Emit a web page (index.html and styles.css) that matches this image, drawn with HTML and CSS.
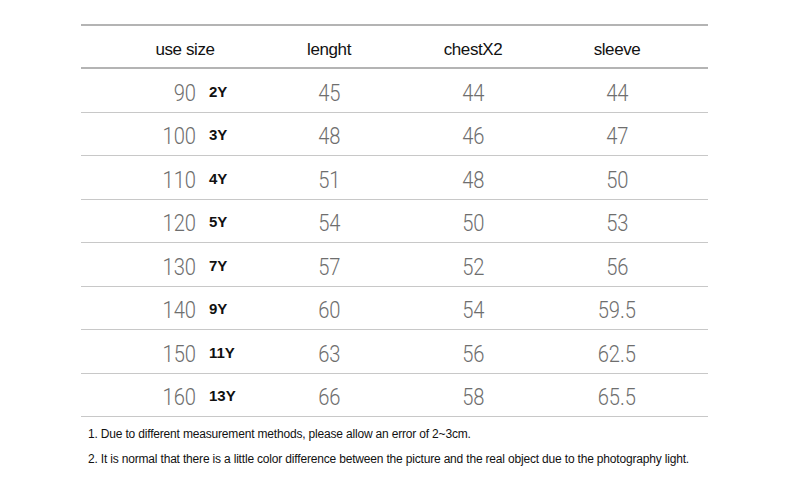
FILE: index.html
```html
<!DOCTYPE html>
<html>
<head>
<meta charset="utf-8">
<link rel="stylesheet" href="styles.css">
</head>
<body>
<div class="page">
  <div class="chart">
    <div class="row head">
      <div class="cell">use size</div>
      <div class="cell">lenght</div>
      <div class="cell">chestX2</div>
      <div class="cell">sleeve</div>
    </div>
    <div class="row"><div class="cell size"><span class="num cm">90</span><span class="age">2Y</span></div><div class="cell"><span class="num">45</span></div><div class="cell"><span class="num">44</span></div><div class="cell"><span class="num">44</span></div></div>
    <div class="row"><div class="cell size"><span class="num cm">100</span><span class="age">3Y</span></div><div class="cell"><span class="num">48</span></div><div class="cell"><span class="num">46</span></div><div class="cell"><span class="num">47</span></div></div>
    <div class="row"><div class="cell size"><span class="num cm">110</span><span class="age">4Y</span></div><div class="cell"><span class="num">51</span></div><div class="cell"><span class="num">48</span></div><div class="cell"><span class="num">50</span></div></div>
    <div class="row"><div class="cell size"><span class="num cm">120</span><span class="age">5Y</span></div><div class="cell"><span class="num">54</span></div><div class="cell"><span class="num">50</span></div><div class="cell"><span class="num">53</span></div></div>
    <div class="row"><div class="cell size"><span class="num cm">130</span><span class="age">7Y</span></div><div class="cell"><span class="num">57</span></div><div class="cell"><span class="num">52</span></div><div class="cell"><span class="num">56</span></div></div>
    <div class="row"><div class="cell size"><span class="num cm">140</span><span class="age">9Y</span></div><div class="cell"><span class="num">60</span></div><div class="cell"><span class="num">54</span></div><div class="cell"><span class="num">59.5</span></div></div>
    <div class="row"><div class="cell size"><span class="num cm">150</span><span class="age">11Y</span></div><div class="cell"><span class="num">63</span></div><div class="cell"><span class="num">56</span></div><div class="cell"><span class="num">62.5</span></div></div>
    <div class="row"><div class="cell size"><span class="num cm">160</span><span class="age">13Y</span></div><div class="cell"><span class="num">66</span></div><div class="cell"><span class="num">58</span></div><div class="cell"><span class="num">65.5</span></div></div>
  </div>
  <div class="notes">
    <p>1. Due to different measurement methods, please allow an error of 2~3cm.</p>
    <p>2. It is normal that there is a little color difference between the picture and the real object due to the photography light.</p>
  </div>
</div>
</body>
</html>
```
FILE: styles.css
```css
html, body {
  margin: 0;
  padding: 0;
  background: #ffffff;
}
.page {
  padding: 24px 82px 0 81px;
  font-family: "Liberation Sans", Arial, sans-serif;
}
.chart {
  border-top: 2px solid #b4b4b4;
}
.row {
  display: grid;
  grid-template-columns: 144px 144px 144px 144px;
  padding-left: 32px;
  height: 42.5px;
  border-bottom: 1px solid #c8c8c8;
  align-items: center;
}
.row.head {
  height: 41px;
  border-bottom: 2px solid #b4b4b4;
  font-size: 17px;
  letter-spacing: -0.4px;
  color: #111;
}
.cell {
  text-align: center;
  padding-top: 5px;
}
.row.head .cell {
  padding-top: 6px;
}
.num {
  display: inline-block;
  font-family: Roboto, "Open Sans", sans-serif;
  font-weight: 300;
  font-size: 24px;
  color: #6e6e6e;
  transform: scaleX(0.84);
}
.cell.size {
  display: flex;
  align-items: center;
  padding-left: 31px;
}
.cm {
  width: 52px;
  text-align: right;
  transform-origin: right center;
}
.age {
  margin-left: 13px;
  font-family: "Liberation Sans", Arial, sans-serif;
  font-weight: 700;
  font-size: 15px;
  color: #111;
  margin-top: -3px;
}
.notes {
  padding: 9px 0 0 7px;
  font-size: 12px;
  letter-spacing: -0.18px;
  color: #111;
  white-space: nowrap;
}
.notes p {
  margin: 0 0 9px;
  line-height: 16px;
}
```
